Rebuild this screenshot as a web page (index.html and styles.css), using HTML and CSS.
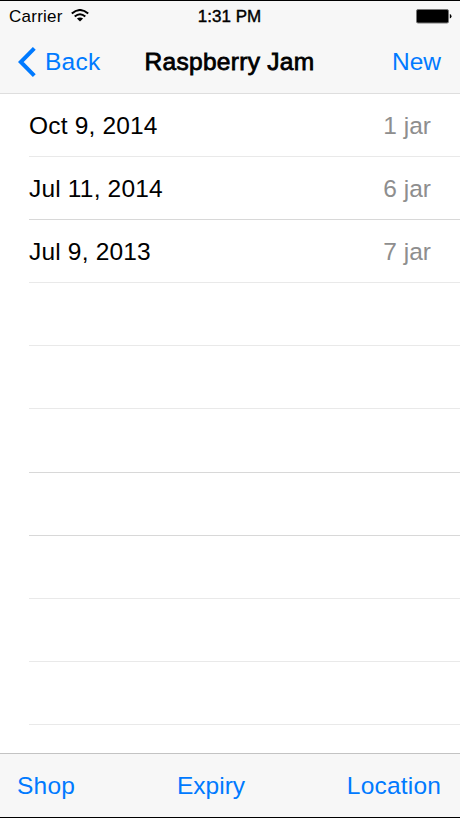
FILE: index.html
```html
<!DOCTYPE html>
<html lang="en">
<head>
<meta charset="utf-8">
<title>Raspberry Jam</title>
<link rel="stylesheet" href="styles.css">
</head>
<body>
<div class="screen">
  <header class="top">
    <div class="status">
      <div class="carrier"><span>Carrier</span>
        <svg class="wifi" width="18" height="13" viewBox="0 0 18 13" fill="none" stroke="#000" stroke-width="2">
          <path d="M.8 4.6Q9-2.6 17.2 4.6"/>
          <path d="M3.7 7.6Q9 3 14.3 7.6"/>
          <path d="M9 12.4L5.9 9.6Q9 7.2 12.1 9.6Z" fill="#000" stroke="none"/>
        </svg>
      </div>
      <span class="time">1:31 PM</span>
      <svg class="battery" width="36" height="15" viewBox="0 0 36 15">
        <rect x=".5" y=".5" width="32" height="13.5" rx="1.5" fill="#000" stroke="#777"/>
        <path d="M33.8 5Q35.5 5.5 35.5 7.2T33.8 9.5Z"/>
      </svg>
    </div>
    <nav class="nav">
      <a class="back"><svg width="18" height="30" viewBox="0 0 18 30" fill="none" stroke="#007aff" stroke-width="4"><path d="M16.3 1.4L2.8 15L16.3 28.6"/></svg><span>Back</span></a>
      <h1 class="title">Raspberry Jam</h1>
      <a class="new">New</a>
    </nav>
  </header>
  <main class="list">
    <div class="row"><span class="date">Oct 9, 2014</span><span class="qty">1 jar</span></div>
    <div class="row strong"><span class="date">Jul 11, 2014</span><span class="qty">6 jar</span></div>
    <div class="row"><span class="date">Jul 9, 2013</span><span class="qty">7 jar</span></div>
    <div class="row"></div>
    <div class="row"></div>
    <div class="row strong"></div>
    <div class="row strong"></div>
    <div class="row"></div>
    <div class="row"></div>
    <div class="row"></div>
  </main>
  <footer class="toolbar"><a class="shop">Shop</a><a class="expiry">Expiry</a><a class="location">Location</a></footer>
</div>
</body>
</html>
```
FILE: styles.css
```css
* { box-sizing: border-box; }
body { margin: 0; background: #fff; font-family: "Liberation Sans", Arial, sans-serif; color: #000; }
.screen { width: 460px; height: 818px; display: flex; flex-direction: column; overflow: hidden; border-top: 1px solid #000; border-bottom: 1px solid #000; font-size: 24.5px; }
.top { height: 92.5px; flex: none; background: #f7f7f7; border-bottom: 1px solid #dedede; }
.status { height: 30px; display: grid; grid-template-columns: 1fr auto 1fr; align-items: center; padding: 0 8px 0 9px; font-size: 17px; }
.carrier { display: flex; align-items: center; gap: 8px; letter-spacing: .25px; padding-top: 1px; }
.wifi { margin-top: -3px; }
.time { -webkit-text-stroke: .4px #000; padding: 1px 2px 0 0; }
.battery { justify-self: end; }
.nav { height: 62px; display: grid; grid-template-columns: 1fr auto 1fr; align-items: center; padding: 0 19px 0 18px; }
.back { display: flex; align-items: center; gap: 9px; color: #007aff; letter-spacing: .25px; }
.title { margin: 0; font-size: 24.5px; font-weight: 400; letter-spacing: .3px; -webkit-text-stroke: .8px #000; }
.new { justify-self: end; color: #007aff; }
.list { flex: 1; overflow: hidden; }
.row { height: 63.2px; margin-left: 29px; padding: 2px 29px 0 0; display: flex; align-items: center; justify-content: space-between; border-bottom: 1px solid #e9e9e9; }
.strong { border-bottom-color: #d8d8d8; }
.date { letter-spacing: .18px; }
.qty { color: #8e8e8e; }
.toolbar { height: 64px; flex: none; display: flex; justify-content: space-between; align-items: center; padding: 0 19px 0 17px; background: #f7f7f7; border-top: 1px solid #c3c3c3; color: #007aff; }
.shop { letter-spacing: .25px; }
.location { letter-spacing: .22px; margin-right: -.2px; }
```
